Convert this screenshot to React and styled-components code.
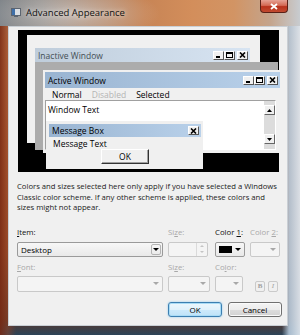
import React from 'react';
import styled, { createGlobalStyle } from 'styled-components';

const Global = createGlobalStyle`
  html, body { margin:0; padding:0; background:#fff; }
  body { font-family: "Open Sans", "Noto Sans", sans-serif; }
`;

const Frame = styled.div`
  width:300px;
  height:335px;
  display:flex;
  flex-direction:column;
  overflow:hidden;
  background:
    linear-gradient(90deg, rgba(120,40,18,.85) 0, rgba(150,66,36,.5) 8px, transparent 16px, transparent 282px, rgba(180,200,218,.9) 289px, rgba(222,230,238,.95) 300px),
    linear-gradient(180deg, #a58872 0, #c27a4c 40px, #b3653a 140px, #9a502c 250px, #5a362a 320px, #2c4458 335px);
`;

const TitleBar = styled.div`
  height:26px;
  flex-shrink:0;
  display:flex;
  align-items:flex-start;
  padding-left:11px;
  background:
    radial-gradient(ellipse 90px 30px at 70px 14px, rgba(235,235,235,.5), transparent),
    linear-gradient(90deg, #7b8085 0%, #8e8985 14%, #ab846a 30%, #c78455 48%, #d38e5b 64%, #d29464 78%, #c4a48c 90%, #c8ccd0 100%);
`;

const AppIcon = styled.svg`
  margin-top:8px;
  width:10px;
  height:9px;
  flex-shrink:0;
`;

const Title = styled.div`
  margin:7px 0 0 5px;
  font-size:9.5px;
  line-height:12px;
  color:#111;
  text-shadow:0 0 5px rgba(255,255,255,.9);
  flex:1;
`;

const CloseBtn = styled.div`
  width:28px;
  height:13px;
  margin-right:12px;
  border:1px solid #5a2016;
  border-top:none;
  border-radius:0 0 4px 4px;
  box-sizing:border-box;
  background:linear-gradient(180deg, #e6a294 0%, #d46a55 45%, #b8321c 55%, #c24a30 100%);
  display:flex;
  align-items:center;
  justify-content:center;
`;

const Body = styled.div`
  flex:1;
  display:flex;
  padding:0 12px 9px 8px;
`;

const Client = styled.div`
  flex:1;
  background:#f0f0f0;
  border:1px solid #c9cfd5;
  box-sizing:border-box;
  display:flex;
  flex-direction:column;
  font-size:8px;
  color:#000;
`;

const Preview = styled.div`
  position:relative;
  margin:3px 0 0 9px;
  width:261px;
  height:142px;
  background:#000;
  flex-shrink:0;
  font-size:8.5px;
`;

const Win = styled.div`
  position:absolute;
  left:${p => p.$x}px;
  top:${p => p.$y}px;
  width:${p => p.$w}px;
  height:${p => p.$h}px;
  box-sizing:border-box;
  background:${p => p.$bg || '#f0f0f0'};
  padding:${p => p.$pad || '0'};
  display:flex;
  flex-direction:column;
`;

const Caption = styled.div`
  height:${p => p.$h}px;
  flex-shrink:0;
  display:flex;
  align-items:center;
  padding:0 2px 0 3px;
  background:${p => (p.$active
    ? 'linear-gradient(90deg, #99b4d1, #b9d1ea)'
    : 'linear-gradient(90deg, #bfcddb, #d7e4f2)')};
  color:${p => (p.$active ? '#000' : '#434e54')};
  span { flex:1; white-space:nowrap; }
`;

const CapBtn = styled.div`
  width:11px;
  height:9px;
  box-sizing:border-box;
  border:1px solid;
  border-color:#fff #555 #555 #fff;
  background:#f0f0f0;
  margin-left:${p => p.$gap || 0}px;
  display:flex;
  align-items:center;
  justify-content:center;
  svg { display:block; }
`;

const MenuRow = styled.div`
  height:12px;
  display:flex;
  align-items:center;
  padding-left:6px;
  flex-shrink:0;
`;

const MenuItem = styled.span`
  padding:0 5px 0 1px;
  margin-right:4px;
  color:${p => (p.$disabled ? '#b4b4b4' : '#000')};
`;

const TextArea = styled.div`
  flex:1;
  display:flex;
  background:#fff;
  border:1px solid;
  border-color:#a0a0a0 #fff #fff #a0a0a0;
  margin-right:4px;
`;

const TextBody = styled.div`
  flex:1;
  padding:3px 0 0 2px;
`;

const Scroll = styled.div`
  width:11px;
  display:flex;
  flex-direction:column;
  justify-content:space-between;
  background:#dcdcdc;
  padding-top:4px;
  padding-bottom:5px;
`;

const ScrollBtn = styled.div`
  height:10px;
  box-sizing:border-box;
  border:1px solid;
  border-color:#fff #666 #666 #fff;
  background:#f0f0f0;
  display:flex;
  align-items:center;
  justify-content:center;
`;

const MsgText = styled.div`
  padding:2px 0 0 4px;
  height:9px;
  line-height:9px;
`;

const MsgOk = styled.div`
  align-self:flex-start;
  margin:1px 0 0 52px;
  width:48px;
  height:15px;
  box-sizing:border-box;
  border:1px solid;
  border-color:#fff #333 #333 #fff;
  box-shadow:inset -1px -1px 0 #a0a0a0;
  display:flex;
  align-items:center;
  justify-content:center;
  background:#f0f0f0;
`;

const Desc = styled.p`
  margin:9px 0 0 8px;
  font-size:7.7px;
  line-height:10.5px;
  color:#222;
  white-space:nowrap;
`;

const Form = styled.div`
  margin:14px 0 0 8px;
  display:grid;
  grid-template-columns:146px 42px 30px 30px;
  column-gap:5px;
  align-items:end;
`;

const Field = styled.div`
  display:flex;
  flex-direction:column;
  align-items:${p => (p.$end ? 'flex-end' : 'stretch')};
  margin-top:${p => p.$top || 0}px;
`;

const Label = styled.div`
  font-size:7.8px;
  line-height:10px;
  height:10px;
  margin-bottom:${p => p.$mb || 5}px;
  color:${p => (p.$disabled ? '#a8a8a8' : '#111')};
  white-space:nowrap;
  u { text-decoration:underline; }
`;

const Combo = styled.div`
  height:${p => p.$h || 15}px;
  width:${p => (p.$w ? `${p.$w}px` : 'auto')};
  box-sizing:border-box;
  border:1px solid ${p => (p.$disabled ? '#c9c9c9' : '#9a9a9a')};
  border-radius:2px;
  background:${p => (p.$disabled ? '#f4f4f4' : 'linear-gradient(180deg, #f7f7f7, #e9e9e9)')};
  display:flex;
  align-items:center;
  padding:0 1px 0 3px;
  font-size:8px;
`;

const ComboText = styled.span`
  flex:1;
`;

const Swatch = styled.span`
  width:14px;
  height:7px;
  background:#000;
  margin-right:2px;
`;

const Arrow = styled.span`
  width:10px;
  height:11px;
  box-sizing:border-box;
  display:flex;
  align-items:center;
  justify-content:center;
  border:${p => (p.$boxed ? '1px solid #b4b4b4' : 'none')};
  border-radius:2px;
  &::after {
    content:'';
    border-left:3px solid transparent;
    border-right:3px solid transparent;
    border-top:3px solid ${p => (p.$disabled ? '#a8a8a8' : '#000')};
  }
`;

const Spin = styled.span`
  margin-left:auto;
  width:9px;
  height:13px;
  border-left:1px solid #dadada;
  display:flex;
  flex-direction:column;
  justify-content:space-around;
  align-items:center;
  i {
    display:block;
    border-left:2px solid transparent;
    border-right:2px solid transparent;
  }
  i:first-child { border-bottom:2px solid #c4c4c4; }
  i:last-child { border-top:2px solid #c4c4c4; }
`;

const StyleBtns = styled.div`
  display:flex;
  gap:3px;
  padding-right:2px;
`;

const StyleBtn = styled.div`
  width:10px;
  height:11px;
  box-sizing:border-box;
  border:1px solid #cacaca;
  border-radius:2px;
  color:#a0a0a0;
  font-size:7px;
  font-weight:${p => (p.$bold ? 700 : 400)};
  font-style:${p => (p.$italic ? 'italic' : 'normal')};
  font-family:"Liberation Serif", serif;
  display:flex;
  align-items:center;
  justify-content:center;
`;

const Buttons = styled.div`
  display:flex;
  justify-content:flex-end;
  gap:6px;
  margin:10px 5px 0 0;
`;

const Button = styled.div`
  width:54px;
  height:15px;
  box-sizing:border-box;
  border:1px solid ${p => (p.$default ? '#3c7fb1' : '#707070')};
  border-radius:3px;
  background:${p => (p.$default
    ? 'linear-gradient(180deg, #edf7fd 0, #e0f2fc 50%, #cdeafb 50%, #bfe3f8 100%)'
    : 'linear-gradient(180deg, #f4f4f4 0, #ececec 50%, #dedede 50%, #d2d2d2 100%)')};
  box-shadow:${p => (p.$default ? '0 0 2px #7ec4ee, inset 0 0 0 1px #a9dcf6' : 'inset 0 0 0 1px #fafafa')};
  font-size:8px;
  display:flex;
  align-items:center;
  justify-content:center;
`;

const CapButtons = () => (
  <>
    <CapBtn>
      <svg width="7" height="6" viewBox="0 0 7 6"><rect x="1" y="4" width="4" height="2" fill="#000" /></svg>
    </CapBtn>
    <CapBtn>
      <svg width="7" height="6" viewBox="0 0 7 6"><rect x="0.5" y="0.5" width="6" height="5" fill="none" stroke="#000" /><rect x="0" y="0" width="7" height="2" fill="#000" /></svg>
    </CapBtn>
    <CapBtn $gap={2}>
      <svg width="7" height="6" viewBox="0 0 7 6"><path d="M1 0.5 L6 5.5 M6 0.5 L1 5.5" stroke="#000" strokeWidth="1.6" /></svg>
    </CapBtn>
  </>
);

const Tri = ({ up }) => (
  <svg width="5" height="3" viewBox="0 0 5 3">
    <path d={up ? 'M0 3 L2.5 0 L5 3 Z' : 'M0 0 L2.5 3 L5 0 Z'} fill="#000" />
  </svg>
);

const App = () => (
  <>
    <Global />
    <Frame>
      <TitleBar>
        <AppIcon viewBox="0 0 10 9">
          <rect x="0.5" y="0.5" width="9" height="7" fill="#d9dee4" stroke="#5b6470" />
          <rect x="1" y="1" width="3" height="6" fill="#3f6fa8" />
          <rect x="3" y="8" width="4" height="1" fill="#5b6470" />
        </AppIcon>
        <Title>Advanced Appearance</Title>
        <CloseBtn>
          <svg width="8" height="7" viewBox="0 0 8 7">
            <path d="M1 1 L7 6 M7 1 L1 6" stroke="#fff" strokeWidth="1.8" />
          </svg>
        </CloseBtn>
      </TitleBar>
      <Body>
        <Client>
          <Preview>
            <Win $x={9} $y={5} $w={233} $h={108} $pad="13px 10px 0 8px">
              <Caption $h={14}>
                <span>Inactive Window</span>
                <CapButtons />
              </Caption>
            </Win>
            <Win $x={17} $y={32} $w={243} $h={88} $bg="#acacac" />
            <Win $x={25} $y={40} $w={237} $h={83} $pad="2px 0 3px 2px">
              <Caption $h={16} $active>
                <span>Active Window</span>
                <CapButtons />
              </Caption>
              <MenuRow>
                <MenuItem>Normal</MenuItem>
                <MenuItem $disabled>Disabled</MenuItem>
                <MenuItem>Selected</MenuItem>
              </MenuRow>
              <TextArea>
                <TextBody>Window Text</TextBody>
                <Scroll>
                  <ScrollBtn><Tri up /></ScrollBtn>
                  <ScrollBtn><Tri /></ScrollBtn>
                </Scroll>
              </TextArea>
            </Win>
            <Win $x={28} $y={91} $w={157} $h={48} $pad="3px 2px 0 3px">
              <Caption $h={13} $active>
                <span>Message Box</span>
                <CapBtn>
                  <svg width="7" height="6" viewBox="0 0 7 6"><path d="M1 0.5 L6 5.5 M6 0.5 L1 5.5" stroke="#000" strokeWidth="1.6" /></svg>
                </CapBtn>
              </Caption>
              <MsgText>Message Text</MsgText>
              <MsgOk>OK</MsgOk>
            </Win>
          </Preview>
          <Desc>
            Colors and sizes selected here only apply if you have selected a Windows<br />
            Classic color scheme. If any other scheme is applied, these colors and<br />
            sizes might not appear.
          </Desc>
          <Form>
            <Field>
              <Label><u>I</u>tem:</Label>
              <Combo>
                <ComboText>Desktop</ComboText>
                <Arrow $boxed />
              </Combo>
            </Field>
            <Field>
              <Label $disabled>Si<u>z</u>e:</Label>
              <Combo $disabled $w={40}>
                <Spin><i /><i /></Spin>
              </Combo>
            </Field>
            <Field>
              <Label>Color <u>1</u>:</Label>
              <Combo>
                <Swatch />
                <Arrow />
              </Combo>
            </Field>
            <Field>
              <Label $disabled>Color <u>2</u>:</Label>
              <Combo $disabled>
                <ComboText />
                <Arrow $disabled />
              </Combo>
            </Field>

            <Field $top={5}>
              <Label $disabled $mb={4}><u>F</u>ont:</Label>
              <Combo $disabled $h={16}>
                <ComboText />
                <Arrow $disabled />
              </Combo>
            </Field>
            <Field $top={5}>
              <Label $disabled $mb={4}>Si<u>z</u>e:</Label>
              <Combo $disabled $h={16}>
                <ComboText />
                <Arrow $disabled />
              </Combo>
            </Field>
            <Field $top={5}>
              <Label $disabled $mb={4}>Co<u>l</u>or:</Label>
              <Combo $disabled $h={16} $w={28}>
                <ComboText />
                <Arrow $disabled />
              </Combo>
            </Field>
            <Field $top={5} $end>
              <StyleBtns>
                <StyleBtn $bold>B</StyleBtn>
                <StyleBtn $italic>I</StyleBtn>
              </StyleBtns>
            </Field>
          </Form>
          <Buttons>
            <Button $default>OK</Button>
            <Button>Cancel</Button>
          </Buttons>
        </Client>
      </Body>
    </Frame>
  </>
);

export default App;
